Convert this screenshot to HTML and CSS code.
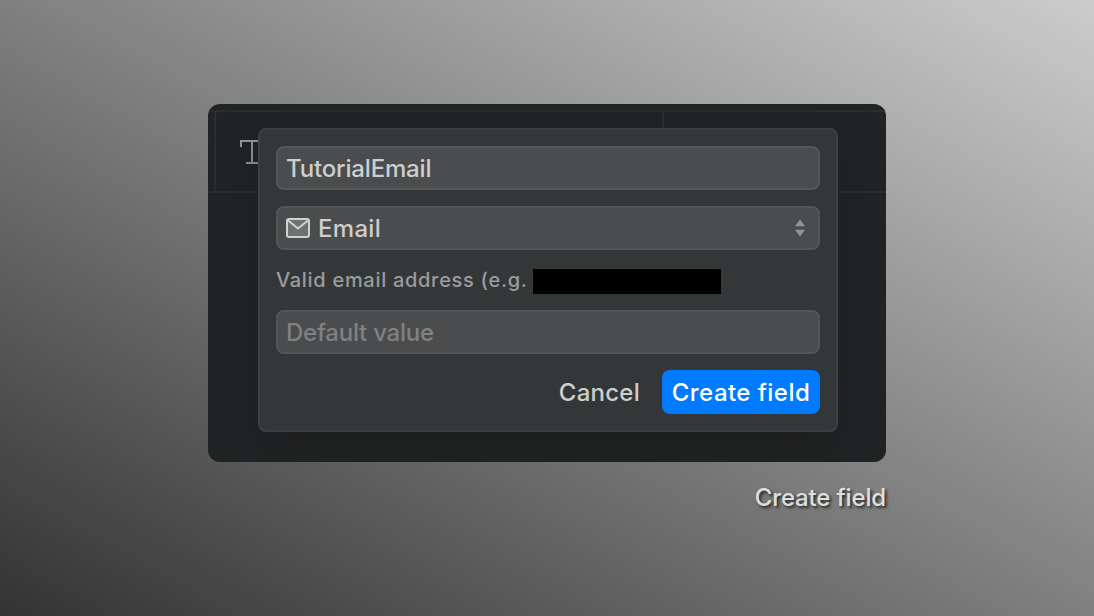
FILE: index.html
```html
<!DOCTYPE html>
<html lang="en">
<head>
  <meta charset="UTF-8">
  <meta name="viewport" content="width=device-width, initial-scale=1.0">
  <title>Create field</title>
  <link rel="stylesheet" href="styles.css">
</head>
<body>

<div class="slide">
  <div class="window">
    <div class="table-header">
      <div class="cell gutter"></div>
      <div class="cell name-cell">
        <svg class="type-icon" width="26" height="26" viewBox="0 0 26 26">
          <path d="M2 8V2h22v6M13 2v22M7 24h12"/>
        </svg>
      </div>
      <div class="cell"></div>
    </div>

    <form class="dialog">
      <input class="field" type="text" value="TutorialEmail" aria-label="Field name">

      <div class="field select">
        <svg class="mail-icon" width="24" height="20" viewBox="0 0 24 20">
          <rect x="1" y="1" width="22" height="18" rx="2"/>
          <path d="M1.500 2L12 10.500 22.500 2"/>
        </svg>
        <span class="select-label">Email</span>
        <svg class="arrows" width="10" height="18" viewBox="0 0 10 18">
          <path d="M5 .5l5 6.700H0zM5 17.500l5-6.700H0z"/>
        </svg>
      </div>

      <div class="hint">
        <span class="hint-text">Valid email address (e.g.</span>
        <span class="redacted"></span>
      </div>

      <input class="field" type="text" placeholder="Default value">

      <div class="buttons">
        <button class="btn" type="button">Cancel</button>
        <button class="btn primary" type="button">Create field</button>
      </div>
    </form>
  </div>

  <div class="caption">Create field</div>
</div>

</body>
</html>
```
FILE: styles.css
```css
* {
  box-sizing: border-box;
}

body {
  margin: 0;
  font-family: Inter, "Liberation Sans", sans-serif;
  font-weight: 500;
}

.slide {
  height: 616px;
  padding: 104px 208px 0;
  background: linear-gradient(to top right, #333, #ccc);
}

.window {
  position: relative;
  height: 358px;
  padding-top: 6px;
  border-radius: 12px;
  background-color: #202425;
  overflow: hidden;
}

/* Table behind the dialog */
.table-header {
  display: grid;
  grid-template-columns: 8px 448px 1fr;
  height: 83px;
  border-top: 2px solid #2a2e2f;
  border-bottom: 2px solid #2a2e2f;
}

.cell {
  border-right: 2px solid #2a2e2f;
}

.cell:last-child {
  border-right: none;
}

.name-cell {
  padding: 27px 0 0 23px;
}

.type-icon {
  display: block;
  fill: none;
  stroke: #98999a;
  stroke-width: 2;
}

/* Dialog floats over the table */
.dialog {
  position: absolute;
  top: 24px;
  left: 50px;
  width: 580px;
  height: 304px;
  padding: 16px;
  display: flex;
  flex-direction: column;
  gap: 16px;
  border: 2px solid #3c4041;
  border-radius: 8px;
  background-color: #343738;
  box-shadow: 0 16px 40px rgba(28, 24, 26, 0.5);
}

.field {
  width: 100%;
  height: 44px;
  padding: 0 8px;
  border: 2px solid #545657;
  border-radius: 8px;
  background-color: #4b4c4e;
  color: #cdcece;
  font-family: inherit;
  font-size: 24px;
  font-weight: 500;
  letter-spacing: -0.18px;
  outline: none;
}

.field::placeholder {
  color: #808182;
  opacity: 1;
  letter-spacing: -0.25px;
}

.select {
  display: flex;
  align-items: center;
  padding: 0 13px 0 8px;
  letter-spacing: 0.3px;
}

.mail-icon {
  fill: #707173;
  stroke: #d0d1d1;
  stroke-width: 2;
}

.mail-icon path {
  fill: none;
}

.select-label {
  flex: 1;
  margin-left: 8px;
}

.arrows {
  fill: #929394;
}

.hint {
  display: flex;
  align-items: center;
  height: 28px;
  color: #9b9c9d;
  font-size: 20px;
  letter-spacing: 0.7px;
}

.hint-text {
  width: 257px;
  white-space: nowrap;
}

.redacted {
  width: 188px;
  height: 25px;
  margin-top: 2px;
  background-color: #000;
}

.buttons {
  display: flex;
  justify-content: flex-end;
  gap: 12px;
}

.btn {
  height: 44px;
  padding: 0 10px;
  border: none;
  border-radius: 8px;
  background: none;
  color: #cdcece;
  font-family: inherit;
  font-size: 24px;
  font-weight: 500;
  letter-spacing: 0.25px;
}

.primary {
  width: 158px;
  padding: 0;
  background-color: #007aff;
  color: #fff;
  letter-spacing: 0.45px;
}

.caption {
  margin-top: 21px;
  color: #dedede;
  font-size: 24px;
  line-height: 30px;
  letter-spacing: -0.15px;
  text-align: right;
  text-shadow: 2px 2px 3px rgba(0, 0, 0, 0.7);
}
```
